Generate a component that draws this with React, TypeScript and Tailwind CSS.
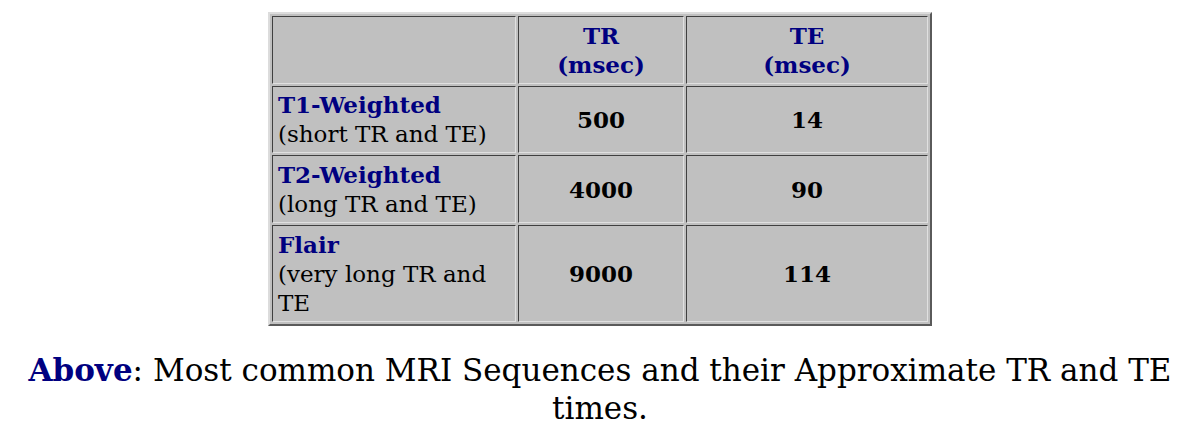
const rows = [
  { name: "T1-Weighted", note: "(short TR and TE)", tr: "500", te: "14", h: "h-[67px]" },
  { name: "T2-Weighted", note: "(long TR and TE)", tr: "4000", te: "90", h: "h-[68px]" },
  { name: "Flair", note: "(very long TR and TE", tr: "9000", te: "114", h: "h-[97px]" },
];

const cell = "border border-t-[#404040] border-l-[#404040] border-b-[#e0e0e0] border-r-[#e0e0e0] bg-[#c0c0c0]";

export default function App() {
  return (
    <div className="min-h-[442px] bg-white pl-[21px] pt-3 font-['DejaVu_Serif',serif] text-black">
      <table className="mx-auto w-[664px] border-separate border-spacing-[2px] border-2 border-t-[#dcdcdc] border-l-[#dcdcdc] border-b-[#5a5a5a] border-r-[#5a5a5a] bg-[#c0c0c0] text-[23px] leading-[29px]">
        <tbody>
          <tr className="h-[68px]">
            <td className={`${cell} w-[244px]`}></td>
            <td className={`${cell} w-[166px] text-center font-bold text-[#000080]`}>
              TR
              <br />
              (msec)
            </td>
            <td className={`${cell} text-center font-bold text-[#000080]`}>
              TE
              <br />
              (msec)
            </td>
          </tr>
          {rows.map((r) => (
            <tr key={r.name} className={r.h}>
              <td className={`${cell} px-[5px] align-middle`}>
                <span className="font-bold text-[#000080]">{r.name}</span>
                <br />
                {r.note}
              </td>
              <td className={`${cell} text-center font-bold`}>{r.tr}</td>
              <td className={`${cell} text-center font-bold`}>{r.te}</td>
            </tr>
          ))}
        </tbody>
      </table>
      <p className="mt-[25px] text-center text-[31px] leading-[38px]">
        <span className="font-bold text-[#000080]">Above</span>: Most common MRI Sequences and their
        Approximate TR and TE times.
      </p>
    </div>
  );
}
